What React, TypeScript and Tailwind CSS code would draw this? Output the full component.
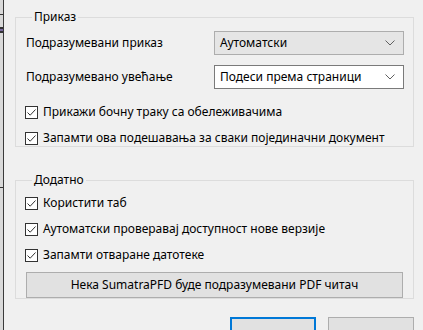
import React from "react";

const font = { fontFamily: '"Noto Sans", "Liberation Sans", sans-serif' };

function Check() {
  return (
    <span className="w-[13px] h-[13px] border border-[#333333] bg-white flex items-center justify-center shrink-0">
      <svg width="11" height="11" viewBox="0 0 11 11">
        <path d="M1.5 5.5 L4.2 8.2 L9.5 2.5" fill="none" stroke="#333333" strokeWidth="1" />
      </svg>
    </span>
  );
}

function CheckRow({ label }: { label: string }) {
  return (
    <div className="h-[16px] flex items-center gap-[5px] pl-[9px]">
      <Check />
      <span className="text-[12px] leading-[16px] text-black whitespace-nowrap">{label}</span>
    </div>
  );
}

function Chevron() {
  return (
    <svg width="10" height="6" viewBox="0 0 10 6">
      <path d="M0.5 0.5 L5 5 L9.5 0.5" fill="none" stroke="#606060" strokeWidth="1" />
    </svg>
  );
}

export default function App() {
  return (
    <div className="w-[423px] h-[330px] bg-[#f0f0f0] flex overflow-hidden" style={font}>
      <div className="w-[3px] h-full bg-[#d9d9d9] flex flex-col shrink-0">
        <div className="h-[14px]" />
        <div className="h-[1px] bg-[#333333]" />
        <div className="h-[12px]" />
        <div className="h-[2px] bg-[#333333]" />
        <div className="h-[2px] bg-[#7a6aa0]" />
        <div className="h-[2px] bg-[#333333]" />
        <div className="h-[154px]" />
        <div className="h-[1px] bg-[#333333]" />
      </div>
      <div className="w-[1px] h-full bg-[#3a3a3a] shrink-0" />
      <div className="flex flex-col pl-[11px]">
        <fieldset className="mt-[9px] w-[399px] h-[154px] border border-[#dcdcdc] pl-[10px] pr-[9px] pt-[6px]">
          <legend className="ml-[6px] px-[2px] text-[12px] leading-[16px] text-black">Приказ</legend>
          <div className="flex flex-col">
            <div className="flex items-center justify-between">
              <span className="text-[12px] leading-[16px] text-black">Подразумевани приказ</span>
              <div className="w-[190px] h-[24px] bg-[#e5e5e5] border border-[#adadad] flex items-center justify-between pl-[5px] pr-[8px]">
                <span className="text-[12px] leading-[16px] text-black">Аутоматски</span>
                <Chevron />
              </div>
            </div>
            <div className="flex items-center justify-between mt-[10px]">
              <span className="text-[12px] leading-[16px] text-black">Подразумевано увећање</span>
              <div className="w-[190px] h-[24px] bg-white border border-[#7a7a7a] flex items-center justify-between pl-[5px] pr-[8px]">
                <span className="text-[12px] leading-[16px] text-black">Подеси према страници</span>
                <Chevron />
              </div>
            </div>
            <div className="mt-[15px] flex flex-col gap-[10px] -ml-[10px]">
              <CheckRow label="Прикажи бочну траку са обележивачима" />
              <CheckRow label="Запамти ова подешавања за сваки појединачни документ" />
            </div>
          </div>
        </fieldset>
        <fieldset className="mt-[25px] w-[399px] h-[153px] border border-[#dcdcdc] pl-[10px] pr-[9px] pt-[7px]">
          <legend className="ml-[6px] px-[2px] text-[12px] leading-[16px] text-black">Додатно</legend>
          <div className="flex flex-col -ml-[10px] gap-[10px]">
            <CheckRow label="Користити таб" />
            <CheckRow label="Аутоматски проверавај доступност нове верзије" />
            <CheckRow label="Запамти отваране датотеке" />
          </div>
          <div className="mt-[9px] w-[377px] h-[26px] bg-[#e1e1e1] border border-[#adadad] flex items-center justify-center">
            <span className="text-[12px] leading-[16px] text-black">Нека SumatraPFD буде подразумевани PDF читач</span>
          </div>
        </fieldset>
        <div className="mt-[18px] flex justify-end gap-[12px] w-[399px]">
          <div className="w-[86px] h-[26px] bg-[#e1e1e1] border-2 border-[#0078d7]" />
          <div className="w-[86px] h-[26px] bg-[#e1e1e1] border border-[#adadad]" />
        </div>
      </div>
    </div>
  );
}
